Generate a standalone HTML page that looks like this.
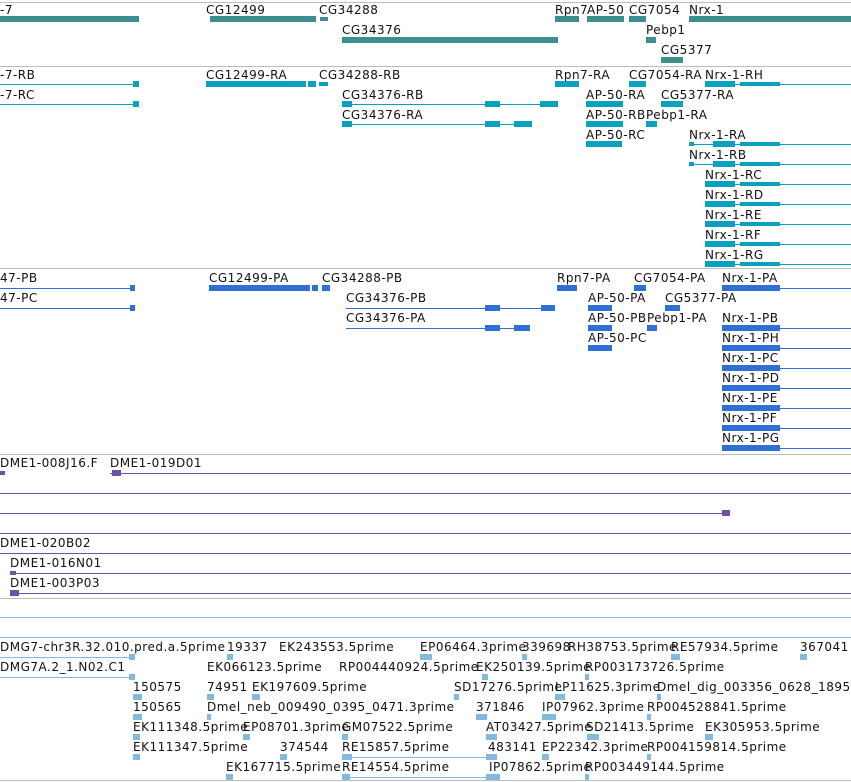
<!DOCTYPE html>
<html><head><meta charset="utf-8">
<style>
body{margin:0;width:851px;height:782px;background:#fff;position:relative;overflow:hidden}
.l{position:absolute;font:12px "DejaVu Sans","Liberation Sans",sans-serif;letter-spacing:0.5px;line-height:14px;white-space:nowrap;color:#111}
.g,.ln,.sep{position:absolute}
.sep{height:1px;background:#bdbdbd;left:0;width:851px}
.T{background:#3d8f8f}.R{background:#0aa0c0}.P{background:#2f6fd6}.C{background:#6e50a8}.E{background:#82b9df}
.ln{height:1px}
</style></head><body>
<div class="sep" style="top:2px"></div>
<div class="sep" style="top:66px"></div>
<div class="sep" style="top:268px"></div>
<div class="sep" style="top:454px"></div>
<div class="sep" style="top:598px"></div>
<div class="sep" style="top:780px"></div>

<div class="l" style="left:0;top:3px">-7</div>
<div class="g T" style="left:0;top:16px;width:139px;height:6px"></div>
<div class="l" style="left:206px;top:3px">CG12499</div>
<div class="g T" style="left:210px;top:16px;width:106px;height:6px"></div>
<div class="l" style="left:319px;top:3px">CG34288</div>
<div class="g T" style="left:320px;top:17px;width:8px;height:4px"></div>
<div class="l" style="left:555px;top:3px">Rpn7</div>
<div class="g T" style="left:555px;top:16px;width:24px;height:6px"></div>
<div class="l" style="left:587px;top:3px">AP-50</div>
<div class="g T" style="left:587px;top:16px;width:37px;height:6px"></div>
<div class="l" style="left:629px;top:3px">CG7054</div>
<div class="g T" style="left:629px;top:16px;width:17px;height:6px"></div>
<div class="l" style="left:689px;top:3px">Nrx-1</div>
<div class="g T" style="left:689px;top:16px;width:162px;height:6px"></div>
<div class="l" style="left:342px;top:23px">CG34376</div>
<div class="g T" style="left:342px;top:37px;width:216px;height:6px"></div>
<div class="l" style="left:646px;top:23px">Pebp1</div>
<div class="g T" style="left:646px;top:37px;width:10px;height:6px"></div>
<div class="l" style="left:661px;top:43px">CG5377</div>
<div class="g T" style="left:661px;top:57px;width:22px;height:6px"></div>

<div class="l" style="left:0;top:68px">-7-RB</div>
<div class="ln R" style="left:0;top:84px;width:139px"></div><div class="g R" style="left:133px;top:81px;width:6px;height:6px"></div>
<div class="l" style="left:206px;top:68px">CG12499-RA</div>
<div class="g R" style="left:206px;top:81px;width:100px;height:6px"></div><div class="g R" style="left:308px;top:81px;width:8px;height:6px"></div><div class="g R" style="left:319px;top:82px;width:9px;height:4px"></div>
<div class="l" style="left:319px;top:68px">CG34288-RB</div>
<div class="l" style="left:555px;top:68px">Rpn7-RA</div>
<div class="g R" style="left:555px;top:81px;width:24px;height:6px"></div>
<div class="l" style="left:629px;top:68px">CG7054-RA</div>
<div class="g R" style="left:629px;top:81px;width:17px;height:6px"></div>
<div class="l" style="left:705px;top:68px">Nrx-1-RH</div>
<div class="ln R" style="left:705px;top:84px;width:146px"></div><div class="g R" style="left:705px;top:81px;width:30px;height:6px"></div><div class="g R" style="left:740px;top:82px;width:40px;height:4px"></div>

<div class="l" style="left:0;top:88px">-7-RC</div>
<div class="ln R" style="left:0;top:104px;width:139px"></div><div class="g R" style="left:133px;top:101px;width:6px;height:6px"></div>
<div class="l" style="left:342px;top:88px">CG34376-RB</div>
<div class="ln R" style="left:342px;top:104px;width:216px"></div><div class="g R" style="left:342px;top:101px;width:10px;height:6px"></div><div class="g R" style="left:485px;top:101px;width:15px;height:6px"></div><div class="g R" style="left:540px;top:101px;width:18px;height:6px"></div>
<div class="l" style="left:586px;top:88px">AP-50-RA</div>
<div class="g R" style="left:586px;top:101px;width:37px;height:6px"></div>
<div class="l" style="left:661px;top:88px">CG5377-RA</div>
<div class="g R" style="left:661px;top:101px;width:22px;height:6px"></div>

<div class="l" style="left:342px;top:108px">CG34376-RA</div>
<div class="ln R" style="left:342px;top:124px;width:190px"></div><div class="g R" style="left:342px;top:121px;width:10px;height:6px"></div><div class="g R" style="left:485px;top:121px;width:15px;height:6px"></div><div class="g R" style="left:514px;top:121px;width:18px;height:6px"></div>
<div class="l" style="left:586px;top:108px">AP-50-RB</div>
<div class="g R" style="left:586px;top:121px;width:37px;height:6px"></div>
<div class="l" style="left:646px;top:108px">Pebp1-RA</div>
<div class="g R" style="left:646px;top:121px;width:11px;height:6px"></div>

<div class="l" style="left:586px;top:128px">AP-50-RC</div>
<div class="g R" style="left:586px;top:141px;width:36px;height:6px"></div>
<div class="l" style="left:689px;top:128px">Nrx-1-RA</div>
<div class="ln R" style="left:689px;top:144px;width:162px"></div><div class="g R" style="left:689px;top:142px;width:5px;height:4px"></div><div class="g R" style="left:713px;top:141px;width:22px;height:6px"></div><div class="g R" style="left:740px;top:142px;width:40px;height:4px"></div>
<div class="l" style="left:689px;top:148px">Nrx-1-RB</div>
<div class="ln R" style="left:689px;top:164px;width:162px"></div><div class="g R" style="left:689px;top:162px;width:5px;height:4px"></div><div class="g R" style="left:713px;top:161px;width:22px;height:6px"></div><div class="g R" style="left:740px;top:162px;width:40px;height:4px"></div>

<div class="l" style="left:705px;top:168px">Nrx-1-RC</div>
<div class="ln R" style="left:705px;top:184px;width:146px"></div><div class="g R" style="left:705px;top:181px;width:30px;height:6px"></div><div class="g R" style="left:740px;top:182px;width:40px;height:4px"></div>
<div class="l" style="left:705px;top:188px">Nrx-1-RD</div>
<div class="ln R" style="left:705px;top:204px;width:146px"></div><div class="g R" style="left:705px;top:201px;width:30px;height:6px"></div><div class="g R" style="left:740px;top:202px;width:40px;height:4px"></div>
<div class="l" style="left:705px;top:208px">Nrx-1-RE</div>
<div class="ln R" style="left:705px;top:224px;width:146px"></div><div class="g R" style="left:705px;top:221px;width:30px;height:6px"></div><div class="g R" style="left:740px;top:222px;width:40px;height:4px"></div>
<div class="l" style="left:705px;top:228px">Nrx-1-RF</div>
<div class="ln R" style="left:705px;top:244px;width:146px"></div><div class="g R" style="left:705px;top:241px;width:30px;height:6px"></div><div class="g R" style="left:740px;top:242px;width:40px;height:4px"></div>
<div class="l" style="left:705px;top:248px">Nrx-1-RG</div>
<div class="ln R" style="left:705px;top:264px;width:146px"></div><div class="g R" style="left:705px;top:261px;width:30px;height:6px"></div><div class="g R" style="left:740px;top:262px;width:40px;height:4px"></div>

<div class="l" style="left:0;top:271px">47-PB</div>
<div class="ln P" style="left:0;top:288px;width:135px"></div><div class="g P" style="left:130px;top:285px;width:5px;height:6px"></div>
<div class="l" style="left:209px;top:271px">CG12499-PA</div>
<div class="g P" style="left:209px;top:285px;width:101px;height:6px"></div><div class="g P" style="left:312px;top:285px;width:6px;height:6px"></div><div class="g P" style="left:322px;top:285px;width:8px;height:6px"></div>
<div class="l" style="left:322px;top:271px">CG34288-PB</div>
<div class="l" style="left:557px;top:271px">Rpn7-PA</div>
<div class="g P" style="left:557px;top:285px;width:20px;height:6px"></div>
<div class="l" style="left:634px;top:271px">CG7054-PA</div>
<div class="g P" style="left:634px;top:285px;width:12px;height:6px"></div>
<div class="l" style="left:722px;top:271px">Nrx-1-PA</div>
<div class="ln P" style="left:722px;top:288px;width:129px"></div><div class="g P" style="left:722px;top:285px;width:58px;height:6px"></div>

<div class="l" style="left:0;top:291px">47-PC</div>
<div class="ln P" style="left:0;top:308px;width:135px"></div><div class="g P" style="left:130px;top:305px;width:5px;height:6px"></div>
<div class="l" style="left:346px;top:291px">CG34376-PB</div>
<div class="ln P" style="left:346px;top:308px;width:209px"></div><div class="g P" style="left:485px;top:305px;width:15px;height:6px"></div><div class="g P" style="left:541px;top:305px;width:14px;height:6px"></div>
<div class="l" style="left:588px;top:291px">AP-50-PA</div>
<div class="g P" style="left:588px;top:305px;width:24px;height:6px"></div>
<div class="l" style="left:665px;top:291px">CG5377-PA</div>
<div class="g P" style="left:665px;top:305px;width:15px;height:6px"></div>

<div class="l" style="left:346px;top:311px">CG34376-PA</div>
<div class="ln P" style="left:346px;top:328px;width:184px"></div><div class="g P" style="left:485px;top:325px;width:15px;height:6px"></div><div class="g P" style="left:514px;top:325px;width:16px;height:6px"></div>
<div class="l" style="left:588px;top:311px">AP-50-PB</div>
<div class="g P" style="left:588px;top:325px;width:24px;height:6px"></div>
<div class="l" style="left:647px;top:311px">Pebp1-PA</div>
<div class="g P" style="left:647px;top:325px;width:10px;height:6px"></div>
<div class="l" style="left:722px;top:311px">Nrx-1-PB</div>
<div class="ln P" style="left:722px;top:328px;width:129px"></div><div class="g P" style="left:722px;top:325px;width:58px;height:6px"></div>

<div class="l" style="left:588px;top:331px">AP-50-PC</div>
<div class="g P" style="left:588px;top:345px;width:24px;height:6px"></div>
<div class="l" style="left:722px;top:331px">Nrx-1-PH</div>
<div class="ln P" style="left:722px;top:348px;width:129px"></div><div class="g P" style="left:722px;top:345px;width:58px;height:6px"></div>
<div class="l" style="left:722px;top:351px">Nrx-1-PC</div>
<div class="ln P" style="left:722px;top:368px;width:129px"></div><div class="g P" style="left:722px;top:365px;width:58px;height:6px"></div>
<div class="l" style="left:722px;top:371px">Nrx-1-PD</div>
<div class="ln P" style="left:722px;top:388px;width:129px"></div><div class="g P" style="left:722px;top:385px;width:58px;height:6px"></div>
<div class="l" style="left:722px;top:391px">Nrx-1-PE</div>
<div class="ln P" style="left:722px;top:408px;width:129px"></div><div class="g P" style="left:722px;top:405px;width:58px;height:6px"></div>
<div class="l" style="left:722px;top:411px">Nrx-1-PF</div>
<div class="ln P" style="left:722px;top:428px;width:129px"></div><div class="g P" style="left:722px;top:425px;width:58px;height:6px"></div>
<div class="l" style="left:722px;top:431px">Nrx-1-PG</div>
<div class="ln P" style="left:722px;top:448px;width:129px"></div><div class="g P" style="left:722px;top:445px;width:58px;height:6px"></div>

<div class="l" style="left:0;top:456px">DME1-008J16.F</div>
<div class="g C" style="left:0;top:471px;width:5px;height:4px"></div>
<div class="l" style="left:110px;top:456px">DME1-019D01</div>
<div class="ln C" style="left:110px;top:473px;width:741px"></div><div class="g C" style="left:112px;top:470px;width:9px;height:6px"></div>
<div class="ln C" style="left:0;top:493px;width:851px"></div>
<div class="ln C" style="left:0;top:513px;width:730px"></div><div class="g C" style="left:722px;top:510px;width:8px;height:6px"></div>
<div class="ln C" style="left:0;top:533px;width:851px"></div>
<div class="l" style="left:0;top:536px">DME1-020B02</div>
<div class="ln C" style="left:0;top:553px;width:851px"></div>
<div class="l" style="left:10px;top:556px">DME1-016N01</div>
<div class="ln C" style="left:10px;top:573px;width:841px"></div><div class="g C" style="left:10px;top:571px;width:6px;height:4px"></div>
<div class="l" style="left:10px;top:576px">DME1-003P03</div>
<div class="ln C" style="left:10px;top:593px;width:841px"></div><div class="g C" style="left:10px;top:590px;width:9px;height:6px"></div>

<div class="ln E" style="left:0;top:617px;width:851px"></div>
<div class="ln E" style="left:0;top:637px;width:851px"></div>

<div class="l" style="left:0;top:640px">DMG7-chr3R.32.010.pred.a.5prime</div>
<div class="ln E" style="left:0;top:657px;width:135px"></div><div class="g E" style="left:129px;top:654px;width:6px;height:6px"></div>
<div class="l" style="left:227px;top:640px">19337</div><div class="g E" style="left:227px;top:654px;width:6px;height:6px"></div>
<div class="l" style="left:279px;top:640px">EK243553.5prime</div>
<div class="l" style="left:420px;top:640px">EP06464.3prime</div><div class="g E" style="left:420px;top:654px;width:12px;height:6px"></div>
<div class="l" style="left:522px;top:640px">339698</div><div class="g E" style="left:522px;top:654px;width:5px;height:6px"></div>
<div class="l" style="left:568px;top:640px">RH38753.5prime</div>
<div class="l" style="left:671px;top:640px">RE57934.5prime</div><div class="g E" style="left:671px;top:654px;width:9px;height:6px"></div>
<div class="l" style="left:800px;top:640px">367041</div><div class="g E" style="left:800px;top:654px;width:7px;height:6px"></div>

<div class="l" style="left:0;top:660px">DMG7A.2_1.N02.C1</div>
<div class="ln E" style="left:0;top:677px;width:135px"></div><div class="g E" style="left:129px;top:674px;width:6px;height:6px"></div>
<div class="l" style="left:207px;top:660px">EK066123.5prime</div>
<div class="l" style="left:339px;top:660px">RP004440924.5prime</div>
<div class="l" style="left:476px;top:660px">EK250139.5prime</div><div class="g E" style="left:482px;top:674px;width:6px;height:6px"></div>
<div class="l" style="left:585px;top:660px">RP003173726.5prime</div><div class="g E" style="left:585px;top:674px;width:4px;height:6px"></div>

<div class="l" style="left:133px;top:680px">150575</div><div class="g E" style="left:133px;top:694px;width:9px;height:6px"></div>
<div class="l" style="left:207px;top:680px">74951</div><div class="g E" style="left:207px;top:694px;width:7px;height:6px"></div>
<div class="l" style="left:252px;top:680px">EK197609.5prime</div><div class="g E" style="left:252px;top:694px;width:8px;height:6px"></div>
<div class="l" style="left:454px;top:680px">SD17276.5prime</div><div class="g E" style="left:454px;top:694px;width:5px;height:6px"></div>
<div class="l" style="left:555px;top:680px">LP11625.3prime</div><div class="g E" style="left:555px;top:694px;width:10px;height:6px"></div>
<div class="l" style="left:657px;top:680px">Dmel_dig_003356_0628_1895.3prime</div><div class="g E" style="left:657px;top:694px;width:4px;height:6px"></div>

<div class="l" style="left:133px;top:700px">150565</div><div class="g E" style="left:133px;top:714px;width:9px;height:6px"></div>
<div class="l" style="left:207px;top:700px">Dmel_neb_009490_0395_0471.3prime</div><div class="g E" style="left:207px;top:714px;width:4px;height:6px"></div>
<div class="l" style="left:476px;top:700px">371846</div><div class="g E" style="left:476px;top:714px;width:11px;height:6px"></div>
<div class="l" style="left:542px;top:700px">IP07962.3prime</div><div class="g E" style="left:542px;top:714px;width:14px;height:6px"></div>
<div class="l" style="left:647px;top:700px">RP004528841.5prime</div><div class="g E" style="left:647px;top:714px;width:4px;height:6px"></div>

<div class="l" style="left:133px;top:720px">EK111348.5prime</div><div class="g E" style="left:133px;top:734px;width:7px;height:6px"></div>
<div class="l" style="left:243px;top:720px">EP08701.3prime</div><div class="g E" style="left:243px;top:734px;width:7px;height:6px"></div>
<div class="l" style="left:342px;top:720px">GM07522.5prime</div><div class="g E" style="left:342px;top:734px;width:6px;height:6px"></div>
<div class="l" style="left:486px;top:720px">AT03427.5prime</div><div class="g E" style="left:486px;top:734px;width:11px;height:6px"></div>
<div class="l" style="left:586px;top:720px">SD21413.5prime</div><div class="g E" style="left:587px;top:734px;width:12px;height:6px"></div>
<div class="l" style="left:705px;top:720px">EK305953.5prime</div><div class="g E" style="left:705px;top:734px;width:8px;height:6px"></div>

<div class="l" style="left:133px;top:740px">EK111347.5prime</div><div class="g E" style="left:133px;top:754px;width:7px;height:6px"></div>
<div class="l" style="left:280px;top:740px">374544</div><div class="g E" style="left:280px;top:754px;width:7px;height:6px"></div>
<div class="l" style="left:342px;top:740px">RE15857.5prime</div>
<div class="ln E" style="left:342px;top:757px;width:155px"></div><div class="g E" style="left:342px;top:754px;width:10px;height:6px"></div><div class="g E" style="left:486px;top:754px;width:11px;height:6px"></div>
<div class="l" style="left:488px;top:740px">483141</div>
<div class="l" style="left:542px;top:740px">EP22342.3prime</div><div class="g E" style="left:542px;top:754px;width:7px;height:6px"></div>
<div class="l" style="left:647px;top:740px">RP004159814.5prime</div><div class="g E" style="left:647px;top:754px;width:4px;height:6px"></div>

<div class="l" style="left:226px;top:760px">EK167715.5prime</div><div class="g E" style="left:226px;top:774px;width:7px;height:6px"></div>
<div class="l" style="left:342px;top:760px">RE14554.5prime</div>
<div class="ln E" style="left:342px;top:777px;width:158px"></div><div class="g E" style="left:342px;top:774px;width:8px;height:6px"></div><div class="g E" style="left:486px;top:774px;width:14px;height:6px"></div>
<div class="l" style="left:489px;top:760px">IP07862.5prime</div>
<div class="l" style="left:585px;top:760px">RP003449144.5prime</div><div class="g E" style="left:585px;top:774px;width:4px;height:6px"></div>
</body></html>
